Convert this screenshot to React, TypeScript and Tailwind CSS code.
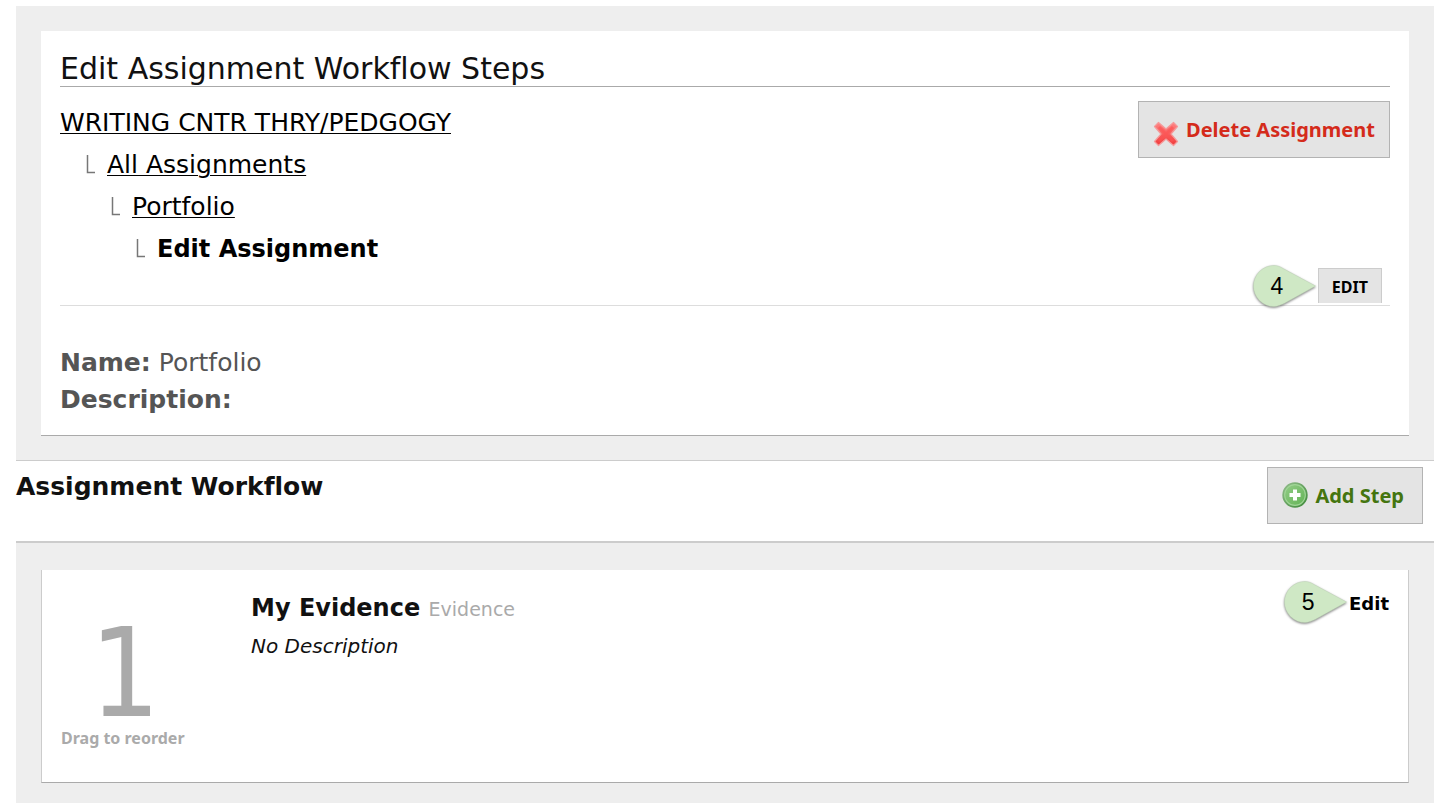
interface Crumb {
  label: string;
  indent: string;
}

interface Step {
  id: number;
  name: string;
  type: string;
  description: string;
}

const crumbs: Crumb[] = [
  { label: 'All Assignments', indent: 'pl-[25px]' },
  { label: 'Portfolio', indent: 'pl-[50px]' },
];

const steps: Step[] = [
  { id: 1, name: 'My Evidence', type: 'Evidence', description: '' },
];

function Callout({ number }: { number: number }) {
  return (
    <span className="absolute right-full top-1/2 flex h-12 w-[68px] -translate-y-1/2">
      <svg viewBox="0 0 68 48" className="absolute inset-0 h-full w-full drop-shadow-[0_1px_1px_rgba(0,0,0,0.5)]" aria-hidden="true">
        <path
          d="M65.500 24L33 6.500C30 4.500 27 3.500 24 3.500A20.500 20.500 0 0 0 24 44.500C27 44.500 31 43 34 41.500Z"
          fill="#cfe8c5"
          stroke="#bcd2b4"
          strokeWidth="0.500"
        />
      </svg>
      <span className="relative w-[54px] pt-3 text-center font-['Liberation_Sans',Arial,sans-serif] text-[23px] font-normal leading-6 text-black">
        {number}
      </span>
    </span>
  );
}

function DeleteIcon() {
  return (
    <svg viewBox="0 0 26 26" className="mt-2 h-[26px] w-[26px]" aria-hidden="true">
      <defs>
        <linearGradient id="cross" x1="0" y1="0" x2="0" y2="1">
          <stop offset="0" stopColor="#ff8585" />
          <stop offset="1" stopColor="#f03a3a" />
        </linearGradient>
      </defs>
      <path
        d="M5.500 1.500L13 8L20.500 1.500L24.500 5.500L18 13L24.500 20.500L20.500 24.500L13 18L5.500 24.500L1.500 20.500L8 13L1.500 5.500Z"
        fill="url(#cross)"
        stroke="#f59a9a"
        strokeWidth="1.200"
        strokeLinejoin="round"
      />
      <path d="M6 6L20 20M20 6L6 20" stroke="#ff5252" strokeWidth="3" opacity="0.600" />
    </svg>
  );
}

function AddIcon() {
  return (
    <svg viewBox="0 0 26 26" className="mb-0.5 h-[26px] w-[26px]" aria-hidden="true">
      <defs>
        <linearGradient id="disc" x1="0" y1="0" x2="1" y2="1">
          <stop offset="0" stopColor="#91cb85" />
          <stop offset="1" stopColor="#64b457" />
        </linearGradient>
        <linearGradient id="rim" x1="0" y1="0" x2="1" y2="1">
          <stop offset="0" stopColor="#93bd8c" />
          <stop offset="1" stopColor="#3d8a38" />
        </linearGradient>
      </defs>
      <circle cx="13" cy="13" r="11.800" fill="#a0d696" stroke="url(#rim)" strokeWidth="1.800" />
      <circle cx="13" cy="13" r="9.800" fill="url(#disc)" />
      <path d="M11 7.500H15V11H18.500V15H15V18.500H11V15H7.500V11H11Z" fill="#fff" />
    </svg>
  );
}

function Branch() {
  return (
    <svg viewBox="0 0 10 20" className="h-5 w-2.5 shrink-0" aria-hidden="true">
      <path d="M2.500 0V17.500H10" fill="none" stroke="#777" strokeWidth="1.500" />
    </svg>
  );
}

export default function App() {
  return (
    <div className="bg-white pl-4 pr-0.5 pt-1.5 font-['DejaVu_Sans',Verdana,sans-serif] text-[#111] [font-variant-ligatures:none]">
      <section className="border-b border-[#ccc] bg-[#eee] px-[25px] pb-6 pt-[25px]">
        <div className="border-b border-[#aaa] bg-white px-[19px] pb-[17px] pt-5">
          <h1 className="border-b border-[#aaa] text-[30px] leading-[35px]">Edit Assignment Workflow Steps</h1>

          <div className="flex items-start justify-between pt-3.5">
            <nav className="pt-px text-[25px] leading-[42px] text-black">
              <a href="#course" className="underline decoration-1 underline-offset-2">WRITING CNTR THRY/PEDGOGY</a>
              {crumbs.map((crumb) => (
                <div key={crumb.label} className={`flex items-center gap-3 ${crumb.indent}`}>
                  <Branch />
                  <a href="#crumb" className="underline decoration-1 underline-offset-2">{crumb.label}</a>
                </div>
              ))}
              <div className="flex items-center gap-3 pl-[75px]">
                <Branch />
                <strong className="text-2xl leading-[42px]">Edit Assignment</strong>
              </div>
            </nav>
            <button className="flex h-[57px] items-center gap-[7px] border border-[#b3b3b3] bg-[#e4e4e4] px-3.5 font-['Noto_Sans',Tahoma,sans-serif] text-xl font-bold text-[#d42b1b]">
              <DeleteIcon />
              Delete Assignment
            </button>
          </div>

          <div className="-mt-0.5 flex justify-end border-b border-[#ddd] pb-0.5 pr-2">
            <div className="relative">
              <Callout number={4} />
              <button className="h-[35px] border-x border-t border-[#ccc] bg-[#e4e4e4] px-[13px] pt-0.5 font-['Noto_Sans',Tahoma,sans-serif] text-base font-bold text-black">
                EDIT
              </button>
            </div>
          </div>

          <dl className="pt-[38px] text-[25px] leading-[37px] text-[#555]">
            <div className="flex gap-2">
              <dt className="font-bold">Name:</dt>
              <dd>Portfolio</dd>
            </div>
            <div className="flex gap-2">
              <dt className="font-bold">Description:</dt>
              <dd></dd>
            </div>
          </dl>
        </div>
      </section>

      <header className="flex items-start justify-between pb-[17px] pr-[11px] pt-1.5">
        <h2 className="text-[25px] font-bold leading-10">Assignment Workflow</h2>
        <button className="flex h-[57px] items-center gap-[7px] border border-[#b3b3b3] bg-[#e4e4e4] pl-3.5 pr-[18px] font-['Noto_Sans',Tahoma,sans-serif] text-xl font-bold text-[#44750f]">
          <AddIcon />
          Add Step
        </button>
      </header>

      <section className="border-t-2 border-[#ccc] bg-[#eee] px-[25px] pb-5 pt-[27px]">
        {steps.map((step) => (
          <article key={step.id} className="flex min-h-[213px] items-start border-x border-b border-x-[#ccc] border-b-[#aaa] bg-white px-[19px] pt-5">
            <div className="w-[190px] shrink-0 text-[#aaa]">
              <div className="w-32 pt-[30px] text-center font-['DejaVu_Sans_Condensed','DejaVu_Sans',Tahoma,sans-serif] text-[123px] leading-[108px]">
                {step.id}
              </div>
              <div className="font-['Noto_Sans',Tahoma,sans-serif] text-base font-bold leading-5">Drag to reorder</div>
            </div>
            <div className="flex-1">
              <h3 className="text-2xl font-bold leading-9">
                {step.name} <span className="text-[19px] font-normal text-[#aaa]">{step.type}</span>
              </h3>
              <p className="pt-[5px] text-xl italic leading-7">{step.description || 'No Description'}</p>
            </div>
            <div className="relative flex h-6">
              <Callout number={5} />
              <a href="#edit-step" className="text-lg font-bold leading-7 text-black">Edit</a>
            </div>
          </article>
        ))}
      </section>
    </div>
  );
}
